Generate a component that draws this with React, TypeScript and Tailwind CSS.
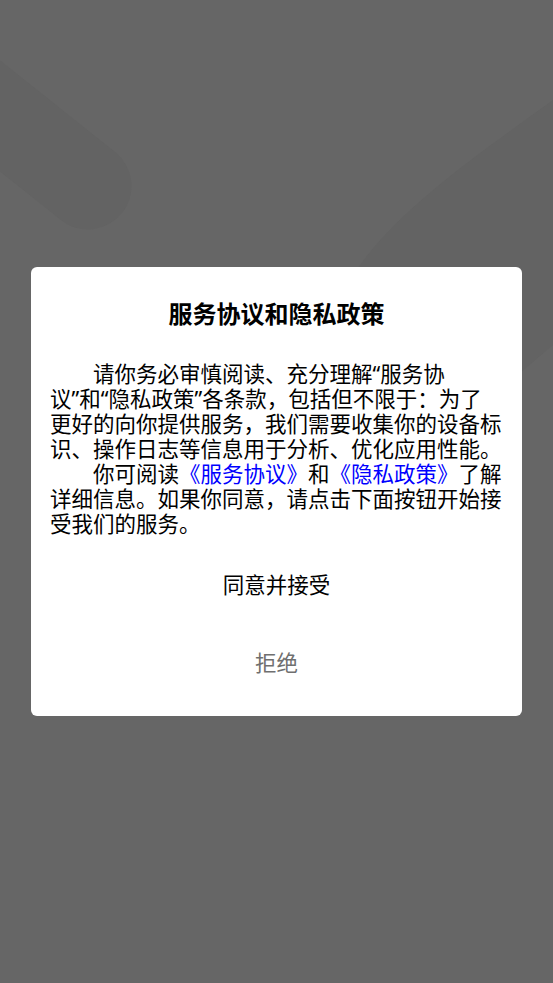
import React from "react";

const Indent = () => <span className="inline-block w-[2em]" />;

const Backdrop = () => (
  <svg className="absolute inset-0 h-full w-full" viewBox="0 0 553 983" preserveAspectRatio="none">
    <line x1="-60" y1="68" x2="88" y2="186" stroke="#636363" strokeWidth="87" strokeLinecap="round" />
    <path d="M553,100 C470,160 390,215 350,280 L200,480 L300,560 L553,345 Z" fill="#636363" />
  </svg>
);

export default function App() {
  return (
    <div className="relative flex h-[983px] w-full items-center overflow-hidden bg-[#666666] font-['Noto_Sans','Noto_Sans_CJK_SC',sans-serif]">
      <Backdrop />
      <div className="relative mx-[31px] flex flex-1 flex-col rounded-[6px] bg-white pb-[14px]">
        <div className="pt-[31px] text-center text-[24px] font-bold leading-[32px] text-black">
          服务协议和隐私政策
        </div>
        <p className="mt-[31px] whitespace-nowrap px-[19px] text-[21.5px] leading-[25px] text-black">
          <Indent />请你务必审慎阅读、充分理解“服务协<br />
          议”和“隐私政策”各条款，包括但不限于：为了<br />
          更好的向你提供服务，我们需要收集你的设备标<br />
          识、操作日志等信息用于分析、优化应用性能。<br />
          <Indent />你可阅读<span className="text-[#0000ff]">《服务协议》</span>和<span className="text-[#0000ff]">《隐私政策》</span>了解<br />
          详细信息。如果你同意，请点击下面按钮开始接<br />
          受我们的服务。
        </p>
        <div className="mt-[10px] flex flex-col">
          <button className="h-[78px] text-[21.5px] text-black">同意并接受</button>
          <button className="h-[78px] text-[21.5px] text-[#6f6f6f]">拒绝</button>
        </div>
      </div>
    </div>
  );
}
